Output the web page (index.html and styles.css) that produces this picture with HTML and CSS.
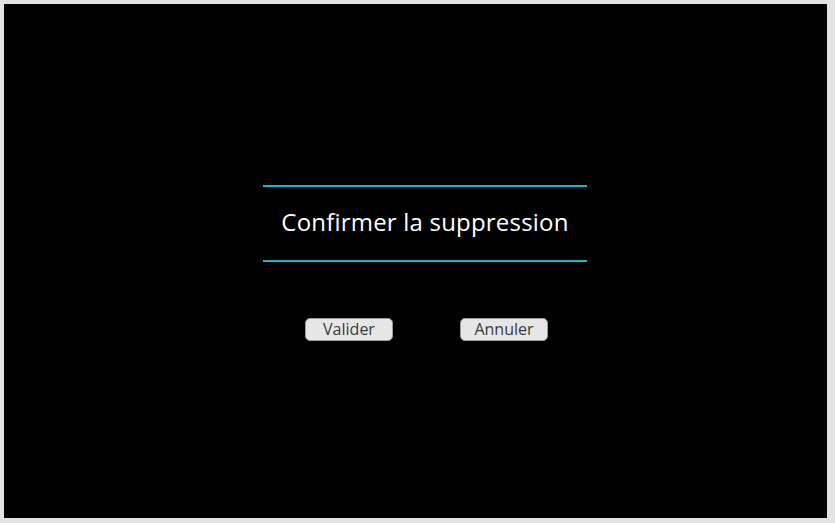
FILE: index.html
```html
<!DOCTYPE html>
<html lang="fr">
<head>
<meta charset="utf-8">
<title>Confirmer la suppression</title>
<link rel="stylesheet" href="styles.css">
</head>
<body>
<main class="screen">
  <section class="dialog">
    <h1 class="dialog-title">Confirmer la suppression</h1>
    <div class="dialog-actions">
      <button class="btn">Valider</button>
      <button class="btn">Annuler</button>
    </div>
  </section>
</main>
</body>
</html>
```

FILE: styles.css
```css
html, body {
  margin: 0;
  padding: 0;
}
body {
  background: #e3e3e3;
  padding: 4px 0 0 4px;
  width: 835px;
  height: 523px;
  box-sizing: border-box;
  font-family: "Open Sans", "Liberation Sans", sans-serif;
}
.screen {
  width: 823px;
  height: 514px;
  background: #000;
  box-sizing: border-box;
  padding: 181px 240px 0 259px;
}
.dialog {
  display: flex;
  flex-direction: column;
}
.dialog-title {
  margin: 0;
  border-top: 2px solid #1ab2d3;
  border-bottom: 2px solid #1ab2d3;
  padding-bottom: 4px;
  box-sizing: border-box;
  height: 77px;
  display: flex;
  align-items: center;
  justify-content: center;
  color: #fff;
  font-size: 24px;
  font-weight: 500;
  letter-spacing: 0.2px;
}
.dialog-actions {
  display: flex;
  justify-content: center;
  gap: 67px;
  margin-top: 56px;
  padding-left: 3px;
}
.btn {
  width: 88px;
  height: 23px;
  padding: 0;
  border: 1px solid #9a9a9a;
  border-radius: 5px;
  background: #e6e6e6;
  color: #3a3a3a;
  font-family: inherit;
  font-size: 16px;
  line-height: 21px;
}
```
